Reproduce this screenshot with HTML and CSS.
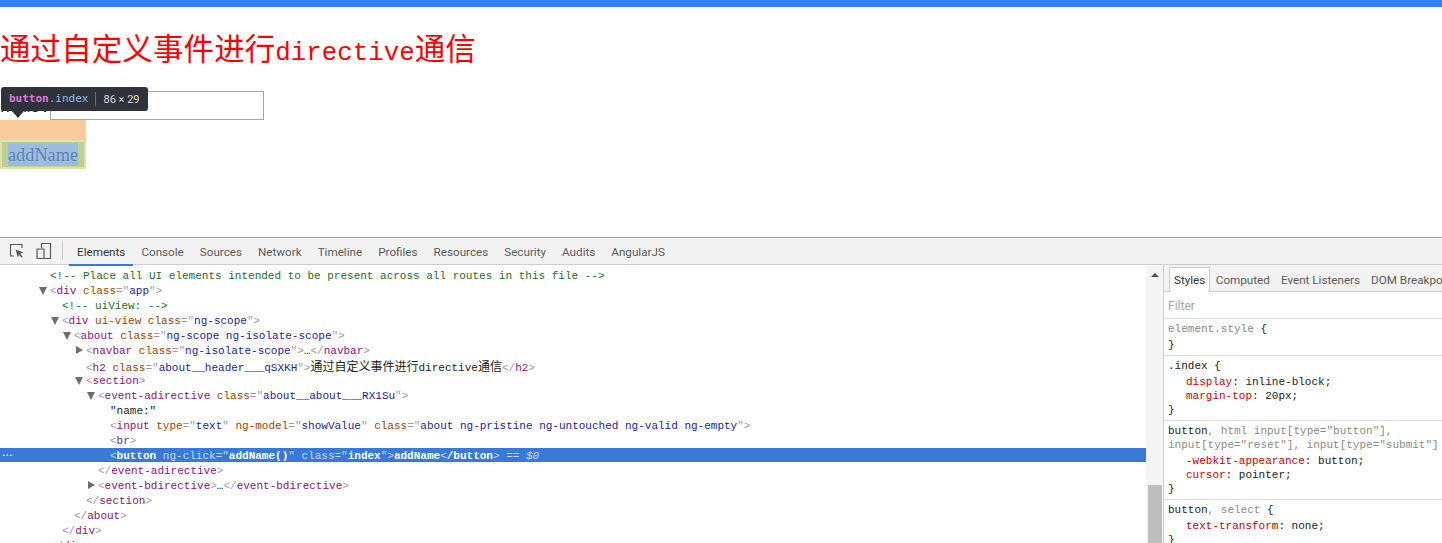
FILE: index.html
```html
<!DOCTYPE html>
<html lang="zh">
<head>
<meta charset="utf-8">
<title>directive</title>
<link rel="stylesheet" href="styles.css">
</head>
<body>
<div class="topbar"></div>
<main class="page">
  <h2 class="title">通过自定义事件进行<span class="title-latin">directive</span>通信</h2>
  <div class="form-row"><span class="name-label">name:</span><input class="text-input" type="text"></div>
  <div class="margin-box"><button class="add-btn"><span class="btn-content">addName</span></button></div>
  <div class="tooltip">
    <span class="tip-tag">button</span><span class="tip-class">.index</span><span class="tip-sep"></span><span class="tip-size">86 × 29</span>
    <span class="tip-arrow"></span>
  </div>
</main>
<section class="devtools">
  <nav class="toolbar">
    <svg class="tool-icon" width="16" height="16" viewBox="0 0 16 16"><path d="M5 13H1.500V1.500H13V5" fill="none" stroke="#5a5a5a" stroke-width="1.200"/><path d="M6.500 6.500l8 3-3.400 1.200 2.700 3-1 1-2.800-3-1.100 3z" fill="#5a5a5a"/></svg>
    <svg class="tool-icon" width="16" height="18" viewBox="0 0 16 18"><path d="M5.500 6V1.500h9v15h-6M1 7h7v9.500H1z" fill="none" stroke="#5a5a5a" stroke-width="1.200"/></svg>
    <span class="tool-sep"></span>
    <span class="tab tab-active">Elements</span>
    <span class="tab">Console</span>
    <span class="tab">Sources</span>
    <span class="tab">Network</span>
    <span class="tab">Timeline</span>
    <span class="tab">Profiles</span>
    <span class="tab">Resources</span>
    <span class="tab">Security</span>
    <span class="tab">Audits</span>
    <span class="tab">AngularJS</span>
  </nav>
  <div class="panes">
    <div class="tree">
      <div class="row x50 cm">&lt;!-- Place all UI elements intended to be present across all routes in this file --&gt;</div>
      <div class="row x50"><span class="tri open"></span><span class="t">&lt;</span><span class="n">div</span> <span class="a">class</span><span class="t">="</span><span class="v">app</span><span class="t">"&gt;</span></div>
      <div class="row x62 cm">&lt;!-- uiView: --&gt;</div>
      <div class="row x62"><span class="tri open"></span><span class="t">&lt;</span><span class="n">div</span> <span class="a">ui-view</span> <span class="a">class</span><span class="t">="</span><span class="v">ng-scope</span><span class="t">"&gt;</span></div>
      <div class="row x74"><span class="tri open"></span><span class="t">&lt;</span><span class="n">about</span> <span class="a">class</span><span class="t">="</span><span class="v">ng-scope ng-isolate-scope</span><span class="t">"&gt;</span></div>
      <div class="row x86"><span class="tri closed"></span><span class="t">&lt;</span><span class="n">navbar</span> <span class="a">class</span><span class="t">="</span><span class="v">ng-isolate-scope</span><span class="t">"&gt;</span>…<span class="t">&lt;/</span><span class="n">navbar</span><span class="t">&gt;</span></div>
      <div class="row x86"><span class="t">&lt;</span><span class="n">h2</span> <span class="a">class</span><span class="t">="</span><span class="v">about__header___qSXKH</span><span class="t">"&gt;</span><span class="cjk">通过自定义事件进行</span>directive<span class="cjk">通信</span><span class="t">&lt;/</span><span class="n">h2</span><span class="t">&gt;</span></div>
      <div class="row x86"><span class="tri open"></span><span class="t">&lt;</span><span class="n">section</span><span class="t">&gt;</span></div>
      <div class="row x98"><span class="tri open"></span><span class="t">&lt;</span><span class="n">event-adirective</span> <span class="a">class</span><span class="t">="</span><span class="v">about__about___RX1Su</span><span class="t">"&gt;</span></div>
      <div class="row x110">"name:"</div>
      <div class="row x110"><span class="t">&lt;</span><span class="n">input</span> <span class="a">type</span><span class="t">="</span><span class="v">text</span><span class="t">"</span> <span class="a">ng-model</span><span class="t">="</span><span class="v">showValue</span><span class="t">"</span> <span class="a">class</span><span class="t">="</span><span class="v">about ng-pristine ng-untouched ng-valid ng-empty</span><span class="t">"&gt;</span></div>
      <div class="row x110"><span class="t">&lt;</span><span class="n">br</span><span class="t">&gt;</span></div>
      <div class="row x110 selected"><span class="dots">•••</span><span class="st">&lt;</span><b>button</b> <span class="st">ng-click="</span><b>addName()</b><span class="st">"</span> <span class="st">class="</span><b>index</b><span class="st">"&gt;</span><b>addName</b><span class="st">&lt;</span><b>/button</b><span class="st">&gt;</span> <span class="st">== <i>$0</i></span></div>
      <div class="row x98"><span class="t">&lt;/</span><span class="n">event-adirective</span><span class="t">&gt;</span></div>
      <div class="row x98"><span class="tri closed"></span><span class="t">&lt;</span><span class="n">event-bdirective</span><span class="t">&gt;</span>…<span class="t">&lt;/</span><span class="n">event-bdirective</span><span class="t">&gt;</span></div>
      <div class="row x86"><span class="t">&lt;/</span><span class="n">section</span><span class="t">&gt;</span></div>
      <div class="row x74"><span class="t">&lt;/</span><span class="n">about</span><span class="t">&gt;</span></div>
      <div class="row x62"><span class="t">&lt;/</span><span class="n">div</span><span class="t">&gt;</span></div>
      <div class="row x50"><span class="t">&lt;/</span><span class="n">div</span><span class="t">&gt;</span></div>
    </div>
    <div class="scrollbar"><span class="scroll-up"></span><span class="scroll-thumb"></span></div>
    <aside class="sidebar">
      <div class="side-tabs">
        <span class="side-tab side-active">Styles</span>
        <span class="side-tab">Computed</span>
        <span class="side-tab">Event Listeners</span>
        <span class="side-tab">DOM Breakpoints</span>
      </div>
      <div class="filter">Filter</div>
      <div class="rule"><div><span class="sel">element.style</span> {</div><div class="close-gap">}</div></div>
      <div class="rule"><div>.index {</div><div class="decl first"><span class="p">display</span>: inline-block;</div><div class="decl"><span class="p">margin-top</span>: 20px;</div><div>}</div></div>
      <div class="rule"><div>button<span class="dim">, html input[type="button"],</span></div><div><span class="dim">input[type="reset"], input[type="submit"]</span></div><div class="decl first"><span class="p">-webkit-appearance</span>: button;</div><div class="decl"><span class="p">cursor</span>: pointer;</div><div>}</div></div>
      <div class="rule"><div>button<span class="dim">, select</span> {</div><div class="decl first"><span class="p">text-transform</span>: none;</div><div>}</div></div>
    </aside>
  </div>
</section>
</body>
</html>
```

FILE: styles.css
```css
* { box-sizing: border-box; }
html, body { margin: 0; height: 100%; overflow: hidden; background: #fff; }
.topbar { height: 7px; background: #2f83f6; }
.page { position: relative; height: 230px; padding-top: 22px; font-family: "Noto Sans CJK SC", serif; }
.title { margin: 0; height: 36px; font-size: 30.6px; line-height: 36px; font-weight: 400; color: #f00; white-space: nowrap; }
.title-latin { font-family: "Liberation Mono", monospace; font-size: 25.800px; }
.form-row { display: flex; height: 29px; margin-top: 26px; }
.name-label { width: 50px; padding-top: 2px; font: 16.700px/29px "Liberation Mono", monospace; color: #222; }
.text-input { width: 214px; height: 29px; margin: 0; padding: 0; border: 1px solid #a5a5a5; background: #fff; }
.margin-box { width: 86px; height: 49px; padding-top: 20px; background: #f9cc9d; }
.add-btn { display: block; width: 86px; height: 29px; padding: 1px 6px; border: 2px solid #e0e3a8; background: #bcd095; }
.btn-content { display: block; height: 23px; background: #9dbce3; color: #5d84ad; font: 18.300px/24px "Liberation Serif", serif; white-space: nowrap; overflow: hidden; text-align: center; }
.tooltip { position: absolute; left: 1px; top: 80px; display: flex; align-items: center; width: 147px; height: 24px; padding-left: 8px; border-radius: 3px; background: #2f323a; font: 11px/24px "DejaVu Sans Mono", monospace; white-space: nowrap; }
.tip-tag { color: #d57bd3; font-weight: 700; }
.tip-class { color: #8cc0de; }
.tip-sep { width: 1px; height: 14px; margin: 0 8px 0 6px; background: #6b6e75; }
.tip-size { color: #dcdcdc; font: 11px "Roboto", sans-serif; }
.tip-arrow { position: absolute; left: 11px; top: 24px; border: 6px solid transparent; border-top: 7px solid #2f323a; border-bottom: 0; }

.devtools { height: 306px; border-top: 1px solid #a3a3a3; }
.toolbar { display: flex; align-items: center; height: 27px; padding-left: 9px; background: #f3f3f3; border-bottom: 1px solid #cdcdcd; font: 11.680px Roboto, "Liberation Sans", sans-serif; color: #5a5a5a; }
.tool-icon { flex: none; margin-right: 11px; }
.tool-icon + .tool-icon { margin-right: 10px; }
.tool-sep { width: 1px; height: 18px; margin-right: 6px; background: #cdcdcd; }
.tab { position: relative; padding: 1px 8px 0; line-height: 26px; white-space: nowrap; }
.tab-active { color: #333; }
.tab-active::after { content: ""; position: absolute; left: 0; right: 0; bottom: -1px; height: 2px; background: #3879d9; }
.panes { display: flex; height: 278px; }
.tree { flex: none; width: 1146px; padding-top: 3px; overflow: hidden; font: 11px/17px "Liberation Mono", monospace; color: #222; }
.row { position: relative; height: 15px; white-space: nowrap; }
.x50 { padding-left: 50px; }
.x62 { padding-left: 62px; }
.x74 { padding-left: 74px; }
.x86 { padding-left: 86px; }
.x98 { padding-left: 98px; }
.x110 { padding-left: 110px; }
.cm { color: #236e25; }
.t { color: #a894a6; }
.n { color: #881280; }
.a { color: #994500; }
.v { color: #1a1aa6; }
.cjk { font-family: "Noto Sans CJK SC", sans-serif; font-size: 12px; line-height: 15px; }
.tri { position: absolute; width: 0; height: 0; border-style: solid; border-color: transparent; }
.tri.open { margin-left: -11px; margin-top: 4px; border-width: 8px 4px 0; border-top-color: #6e6e6e; }
.tri.closed { margin-left: -10px; margin-top: 3px; border-width: 4px 0 4px 7px; border-left-color: #6e6e6e; }
.selected { height: 14px; margin-bottom: 1px; line-height: 16px; background: #3879d9; color: #fff; }
.selected .st { color: #c8d8f0; }
.selected b { color: #fff; }
.dots { position: absolute; left: 2px; top: 0; font-size: 6px; color: #fff; }
.scrollbar { position: relative; flex: none; width: 17px; background: #f5f5f5; }
.scroll-up { position: absolute; left: 5px; top: 8px; border: 4px solid transparent; border-bottom-color: #505050; border-top: 0; }
.scroll-thumb { position: absolute; left: 2px; right: 1px; top: 220px; bottom: 0; background: #bdbdbd; }
.sidebar { flex: 1; min-width: 0; overflow: hidden; border-left: 1px solid #cdcdcd; font: 11px/16px "Liberation Mono", monospace; color: #222; }
.side-tabs { display: flex; height: 27px; padding: 2px 0 0 5px; background: #f3f3f3; border-bottom: 1px solid #cdcdcd; font: 11.680px/27px Roboto, "Liberation Sans", sans-serif; color: #5a5a5a; white-space: nowrap; }
.side-tab { flex: none; padding: 0 5.500px; }
.side-active { height: 25px; background: #fff; border: 1px solid #cdcdcd; border-bottom: 0; padding: 0 4px; line-height: 25px; color: #333; }
.filter { height: 26px; padding-left: 4px; font: 12px/28px Roboto, "Liberation Sans", sans-serif; color: #a5a5a5; }
.rule { padding: 2px 0 4px 4px; border-top: 1px solid #dcdcdc; white-space: nowrap; }
.rule div { height: 14px; }
.rule .decl { padding-left: 18px; }
.rule .first, .rule .close-gap { margin-top: 2px; }
.sel { color: #888; }
.dim { color: #8a8a8a; }
.p { color: #c80000; }
```
